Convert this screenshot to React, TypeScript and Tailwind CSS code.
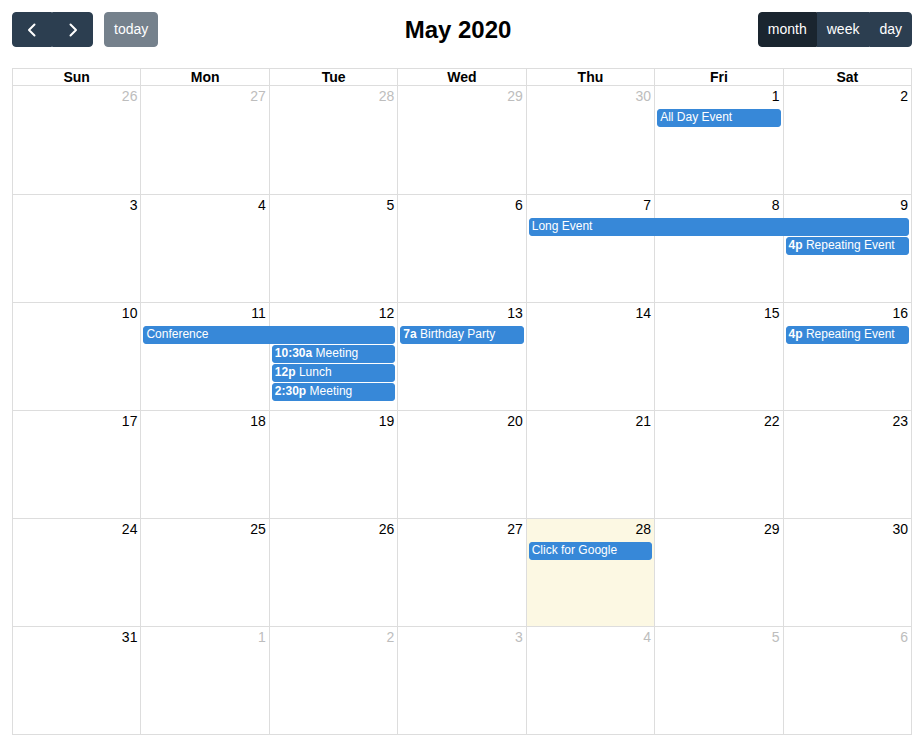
import React from "react";

type Ev = {
  col: number;
  span: number;
  row: number;
  time?: string;
  title: string;
};

type Week = {
  days: { n: number; other?: boolean }[];
  events: Ev[];
  today?: number;
};

const colStart = [
  "col-start-1",
  "col-start-2",
  "col-start-3",
  "col-start-4",
  "col-start-5",
  "col-start-6",
  "col-start-7",
];
const colSpan = [
  "",
  "col-span-1",
  "col-span-2",
  "col-span-3",
  "col-span-4",
  "col-span-5",
  "col-span-6",
  "col-span-7",
];
const rowStart = [
  "",
  "row-start-1",
  "row-start-2",
  "row-start-3",
  "row-start-4",
  "row-start-5",
];

const weeks: Week[] = [
  {
    days: [
      { n: 26, other: true },
      { n: 27, other: true },
      { n: 28, other: true },
      { n: 29, other: true },
      { n: 30, other: true },
      { n: 1 },
      { n: 2 },
    ],
    events: [{ col: 6, span: 1, row: 2, title: "All Day Event" }],
  },
  {
    days: [3, 4, 5, 6, 7, 8, 9].map((n) => ({ n })),
    events: [
      { col: 5, span: 3, row: 2, title: "Long Event" },
      { col: 7, span: 1, row: 3, time: "4p", title: "Repeating Event" },
    ],
  },
  {
    days: [10, 11, 12, 13, 14, 15, 16].map((n) => ({ n })),
    events: [
      { col: 2, span: 2, row: 2, title: "Conference" },
      { col: 4, span: 1, row: 2, time: "7a", title: "Birthday Party" },
      { col: 7, span: 1, row: 2, time: "4p", title: "Repeating Event" },
      { col: 3, span: 1, row: 3, time: "10:30a", title: "Meeting" },
      { col: 3, span: 1, row: 4, time: "12p", title: "Lunch" },
      { col: 3, span: 1, row: 5, time: "2:30p", title: "Meeting" },
    ],
  },
  {
    days: [17, 18, 19, 20, 21, 22, 23].map((n) => ({ n })),
    events: [],
  },
  {
    days: [24, 25, 26, 27, 28, 29, 30].map((n) => ({ n })),
    events: [{ col: 5, span: 1, row: 2, title: "Click for Google" }],
    today: 5,
  },
  {
    days: [
      { n: 31 },
      { n: 1, other: true },
      { n: 2, other: true },
      { n: 3, other: true },
      { n: 4, other: true },
      { n: 5, other: true },
      { n: 6, other: true },
    ],
    events: [],
  },
];

const dows = ["Sun", "Mon", "Tue", "Wed", "Thu", "Fri", "Sat"];

function Chevron({ dir }: { dir: "left" | "right" }) {
  return (
    <svg width="16" height="16" viewBox="0 0 16 16" fill="none">
      <path
        d={dir === "left" ? "M10.5 2.5 L5 8 L10.5 13.5" : "M5.5 2.5 L11 8 L5.5 13.5"}
        stroke="white"
        strokeWidth="2"
        strokeLinecap="round"
        strokeLinejoin="round"
      />
    </svg>
  );
}

export default function App() {
  return (
    <div
      className="bg-white px-3 pt-3 text-black text-[14px]"
      style={{ fontFamily: '"Liberation Sans", Arial, sans-serif' }}
    >
      {/* toolbar */}
      <div className="flex items-center justify-between h-[35px] mb-[21px]">
        <div className="flex items-center">
          <div className="flex">
            <button className="w-[40px] h-[35px] flex items-center justify-center bg-[#2c3e50] border border-[#2c3e50] rounded-l-[4px]">
              <Chevron dir="left" />
            </button>
            <button className="w-[41px] h-[35px] flex items-center justify-center bg-[#2c3e50] border border-[#2c3e50] rounded-r-[4px]">
              <Chevron dir="right" />
            </button>
          </div>
          <button className="ml-[11px] h-[35px] px-[9px] bg-[#2c3e50] border border-[#2c3e50] rounded-[4px] text-white opacity-65 leading-[21px]">
            today
          </button>
        </div>
        <h2 className="text-[24px] font-bold leading-none">May 2020</h2>
        <div className="flex">
          <button className="h-[35px] px-[9px] bg-[#1a252f] border border-[#1a252f] rounded-l-[4px] text-white leading-[21px]">
            month
          </button>
          <button className="h-[35px] px-[9px] bg-[#2c3e50] border border-[#2c3e50] text-white leading-[21px]">
            week
          </button>
          <button className="h-[35px] px-[9px] bg-[#2c3e50] border border-[#2c3e50] rounded-r-[4px] text-white leading-[21px]">
            day
          </button>
        </div>
      </div>

      {/* calendar */}
      <div className="border-r border-b border-[#ddd]">
        <div className="grid grid-cols-7 border-t border-[#ddd]">
          {dows.map((d) => (
            <div
              key={d}
              className="border-l border-[#ddd] text-center font-bold h-[16px] leading-[16px]"
            >
              {d}
            </div>
          ))}
        </div>
        {weeks.map((w, wi) => (
          <div
            key={wi}
            className={
              "grid grid-cols-7 grid-rows-[23px_19px_19px_19px_19px_1fr] border-t border-[#ddd] " +
              (wi === 0 ? "h-[109px]" : "h-[108px]")
            }
          >
            {w.days.map((d, di) => (
              <div
                key={"bg" + di}
                className={
                  colStart[di] +
                  " row-start-1 row-span-6 border-l border-[#ddd] " +
                  (w.today === di + 1 ? "bg-[#fcf8e3]" : "")
                }
              />
            ))}
            {w.days.map((d, di) => (
              <div
                key={"n" + di}
                className={
                  colStart[di] +
                  " row-start-1 text-right pr-[3px] pt-[2px] leading-[16px] " +
                  (d.other ? "text-[#bdbdbd]" : "text-black")
                }
              >
                {d.n}
              </div>
            ))}
            {w.events.map((e, ei) => (
              <div
                key={"e" + ei}
                className={
                  colStart[e.col - 1] +
                  " " +
                  colSpan[e.span] +
                  " " +
                  rowStart[e.row] +
                  " ml-[3px] mr-[2px] h-[18px] bg-[#3788d8] border border-[#3788d8] rounded-[3px] text-white text-[12px] leading-[15px] pl-[2px] whitespace-nowrap overflow-hidden"
                }
              >
                {e.time && <span className="font-bold">{e.time} </span>}
                {e.title}
              </div>
            ))}
          </div>
        ))}
      </div>
    </div>
  );
}
